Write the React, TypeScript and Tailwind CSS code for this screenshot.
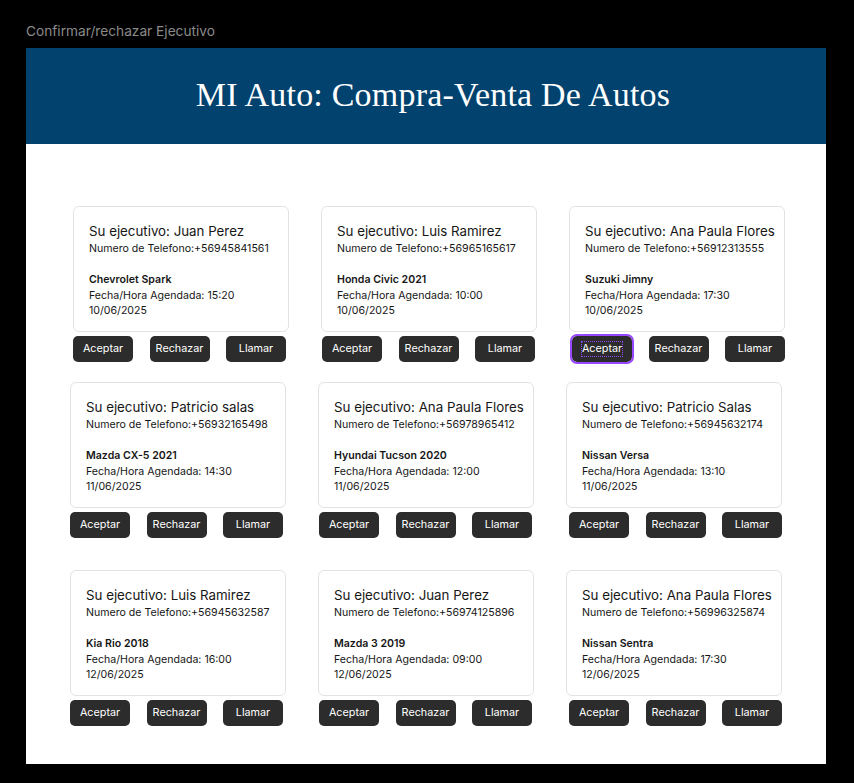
type Cita = {
  ejecutivo: string;
  telefono: string;
  auto: string;
  hora: string;
  fecha: string;
};

const filas: Cita[][] = [
  [
    { ejecutivo: "Juan Perez", telefono: "+56945841561", auto: "Chevrolet Spark", hora: "15:20", fecha: "10/06/2025" },
    { ejecutivo: "Luis Ramirez", telefono: "+56965165617", auto: "Honda Civic 2021", hora: "10:00", fecha: "10/06/2025" },
    { ejecutivo: "Ana Paula Flores", telefono: "+56912313555", auto: "Suzuki Jimny", hora: "17:30", fecha: "10/06/2025" },
  ],
  [
    { ejecutivo: "Patricio salas", telefono: "+56932165498", auto: "Mazda CX-5 2021", hora: "14:30", fecha: "11/06/2025" },
    { ejecutivo: "Ana Paula Flores", telefono: "+56978965412", auto: "Hyundai Tucson 2020", hora: "12:00", fecha: "11/06/2025" },
    { ejecutivo: "Patricio Salas", telefono: "+56945632174", auto: "Nissan Versa", hora: "13:10", fecha: "11/06/2025" },
  ],
  [
    { ejecutivo: "Luis Ramirez", telefono: "+56945632587", auto: "Kia Rio 2018", hora: "16:00", fecha: "12/06/2025" },
    { ejecutivo: "Juan Perez", telefono: "+56974125896", auto: "Mazda 3 2019", hora: "09:00", fecha: "12/06/2025" },
    { ejecutivo: "Ana Paula Flores", telefono: "+56996325874", auto: "Nissan Sentra", hora: "17:30", fecha: "12/06/2025" },
  ],
];

// desplazamiento de la fila de botones por columna
const offsetBotones = ["ml-0", "ml-[1px]", "ml-[3px]"];

function Boton({ label, focused }: { label: string; focused?: boolean }) {
  if (focused) {
    return (
      <button className="w-[60px] h-[26px] rounded-[5px] bg-[#2c2c2c] text-white text-[10.8px] flex items-center justify-center outline-2 outline-[#9747ff] outline-offset-[0px]">
        <span className="outline-1 outline-dotted outline-[#9747ff] leading-[14px]">{label}</span>
      </button>
    );
  }
  return (
    <button className="w-[60px] h-[26px] rounded-[5px] bg-[#2c2c2c] text-white text-[10.8px] flex items-center justify-center">
      {label}
    </button>
  );
}

function TarjetaCita({ cita, col, focusAceptar }: { cita: Cita; col: number; focusAceptar?: boolean }) {
  return (
    <div className="w-[216px] flex flex-col gap-[4px]">
      <div className="h-[126px] rounded-[6px] border border-[#e3e3e3] bg-white pl-[15px] pt-[14px] text-[#161616]">
        <p className="text-[13.3px] leading-[20px] whitespace-nowrap">Su ejecutivo: {cita.ejecutivo}</p>
        <p className="text-[10.6px] leading-[16px] whitespace-nowrap">Numero de Telefono:{cita.telefono}</p>
        <p className="mt-[15px] text-[10.6px] leading-[16px] font-semibold">{cita.auto}</p>
        <p className="text-[10.6px] leading-[15px]">Fecha/Hora Agendada: {cita.hora}</p>
        <p className="text-[10.6px] leading-[15px]">{cita.fecha}</p>
      </div>
      <div className={"w-[213px] flex justify-between " + offsetBotones[col]}>
        <Boton label="Aceptar" focused={focusAceptar} />
        <Boton label="Rechazar" />
        <Boton label="Llamar" />
      </div>
    </div>
  );
}

export default function App() {
  return (
    <div className="w-[854px] h-[783px] bg-black font-['Inter',sans-serif] overflow-hidden">
      <div className="h-[48px] pl-[26px] pt-[22px] text-[13.7px] leading-[18px] text-[#8a8a8a]">
        Confirmar/rechazar Ejecutivo
      </div>
      <div className="ml-[26px] w-[800px] h-[716px] bg-white">
        <header className="h-[96px] bg-[#01426f] flex items-center justify-center">
          <h1 className="text-white text-[34px] font-['Liberation_Serif',serif] tracking-[0.2px] -mt-[3px] ml-[14px]">
            MI Auto: Compra-Venta De Autos
          </h1>
        </header>
        <div className="pt-[62px] flex flex-col">
          {filas.map((fila, i) => (
            <div
              key={i}
              className={
                i === 0
                  ? "flex gap-[32px] pl-[47px]"
                  : i === 1
                  ? "flex gap-[32px] pl-[44px] mt-[20px]"
                  : "flex gap-[32px] pl-[44px] mt-[32px]"
              }
            >
              {fila.map((cita, j) => (
                <TarjetaCita key={j} cita={cita} col={j} focusAceptar={i === 0 && j === 2} />
              ))}
            </div>
          ))}
        </div>
      </div>
    </div>
  );
}
